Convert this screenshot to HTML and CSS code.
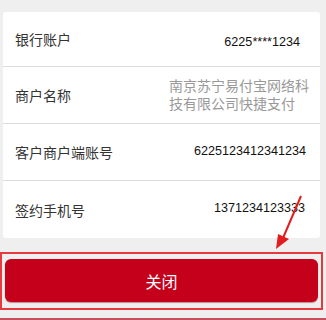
FILE: index.html
```html
<!DOCTYPE html>
<html lang="zh-CN">
<head>
    <meta charset="UTF-8">
    <meta name="viewport" content="width=device-width, initial-scale=1.0">
    <title>签约信息</title>
    <link rel="stylesheet" href="styles.css">
</head>
<body>
    <div class="info-card">
        <div class="info-row row-first">
            <span class="label">银行账户</span>
            <span class="value value-account">6225****1234</span>
        </div>
        <div class="info-row">
            <span class="label">商户名称</span>
            <span class="value value-merchant">南京苏宁易付宝网络科技有限公司快捷支付</span>
        </div>
        <div class="info-row">
            <span class="label">客户商户端账号</span>
            <span class="value value-client">6225123412341234</span>
        </div>
        <div class="info-row row-last">
            <span class="label">签约手机号</span>
            <span class="value value-phone">1371234123333</span>
        </div>
    </div>

    <div class="close-box">
        <button class="close-btn" type="button">关闭</button>
    </div>

    <div class="next-block"></div>

    <!-- annotation arrow -->
    <svg class="mark-arrow" width="40" height="60" viewBox="0 0 40 60">
        <line x1="31" y1="2" x2="13" y2="44" stroke="#e21d1d" stroke-width="2"/>
        <polygon points="6,55 8,40 19,45" fill="#e21d1d"/>
    </svg>
</body>
</html>
```

FILE: styles.css
```css
body {
    margin: 0;
    padding: 0;
    background-color: #efefef;
    font-family: "Noto Sans CJK SC", "Liberation Sans", sans-serif;
    position: relative;
    width: 326px;
    height: 320px;
    overflow: hidden;
}
.info-card {
    background: #fff;
    margin: 12px 6px 0 3px;
    border-radius: 3px;
}
.info-row {
    display: flex;
    align-items: center;
    height: 56px;
    border-bottom: 1px solid #dcdcdc;
    padding-left: 12px;
}
.row-first {
    height: 54px;
}
.row-last {
    border-bottom: none;
    height: 57px;
}
.label {
    font-size: 14px;
    color: #333;
    white-space: nowrap;
}
.value {
    margin-left: auto;
    font-family: "Liberation Sans", "Noto Sans CJK SC", sans-serif;
    font-size: 12.6px;
    color: #111;
    text-align: right;
}
.value-account {
    padding-right: 20px;
    padding-top: 6px;
}
.value-merchant {
    font-family: "Noto Sans CJK SC", sans-serif;
    font-size: 14px;
    line-height: 18px;
    color: #999;
    text-align: left;
    width: 142px;
    padding-right: 9px;
    padding-bottom: 3px;
}
.value-client {
    padding-right: 14px;
    padding-bottom: 3px;
}
.value-phone {
    padding-right: 15px;
    padding-bottom: 3px;
}
.close-box {
    margin: 14px 3px 0 0;
    border: 2px solid #e63a3e;
    padding: 5px 3px 6px 3px;
}
.close-btn {
    display: block;
    width: 100%;
    height: 43px;
    background-color: #c4001b;
    color: #fff;
    border: none;
    border-radius: 6px;
    font-family: "Noto Sans CJK SC", sans-serif;
    font-size: 16px;
    box-shadow: 0 1px 1px rgba(120, 0, 0, 0.4);
}
.next-block {
    margin-top: 8px;
    height: 3px;
    background-color: #c4505e;
}
.mark-arrow {
    position: absolute;
    left: 270px;
    top: 194px;
}
```
